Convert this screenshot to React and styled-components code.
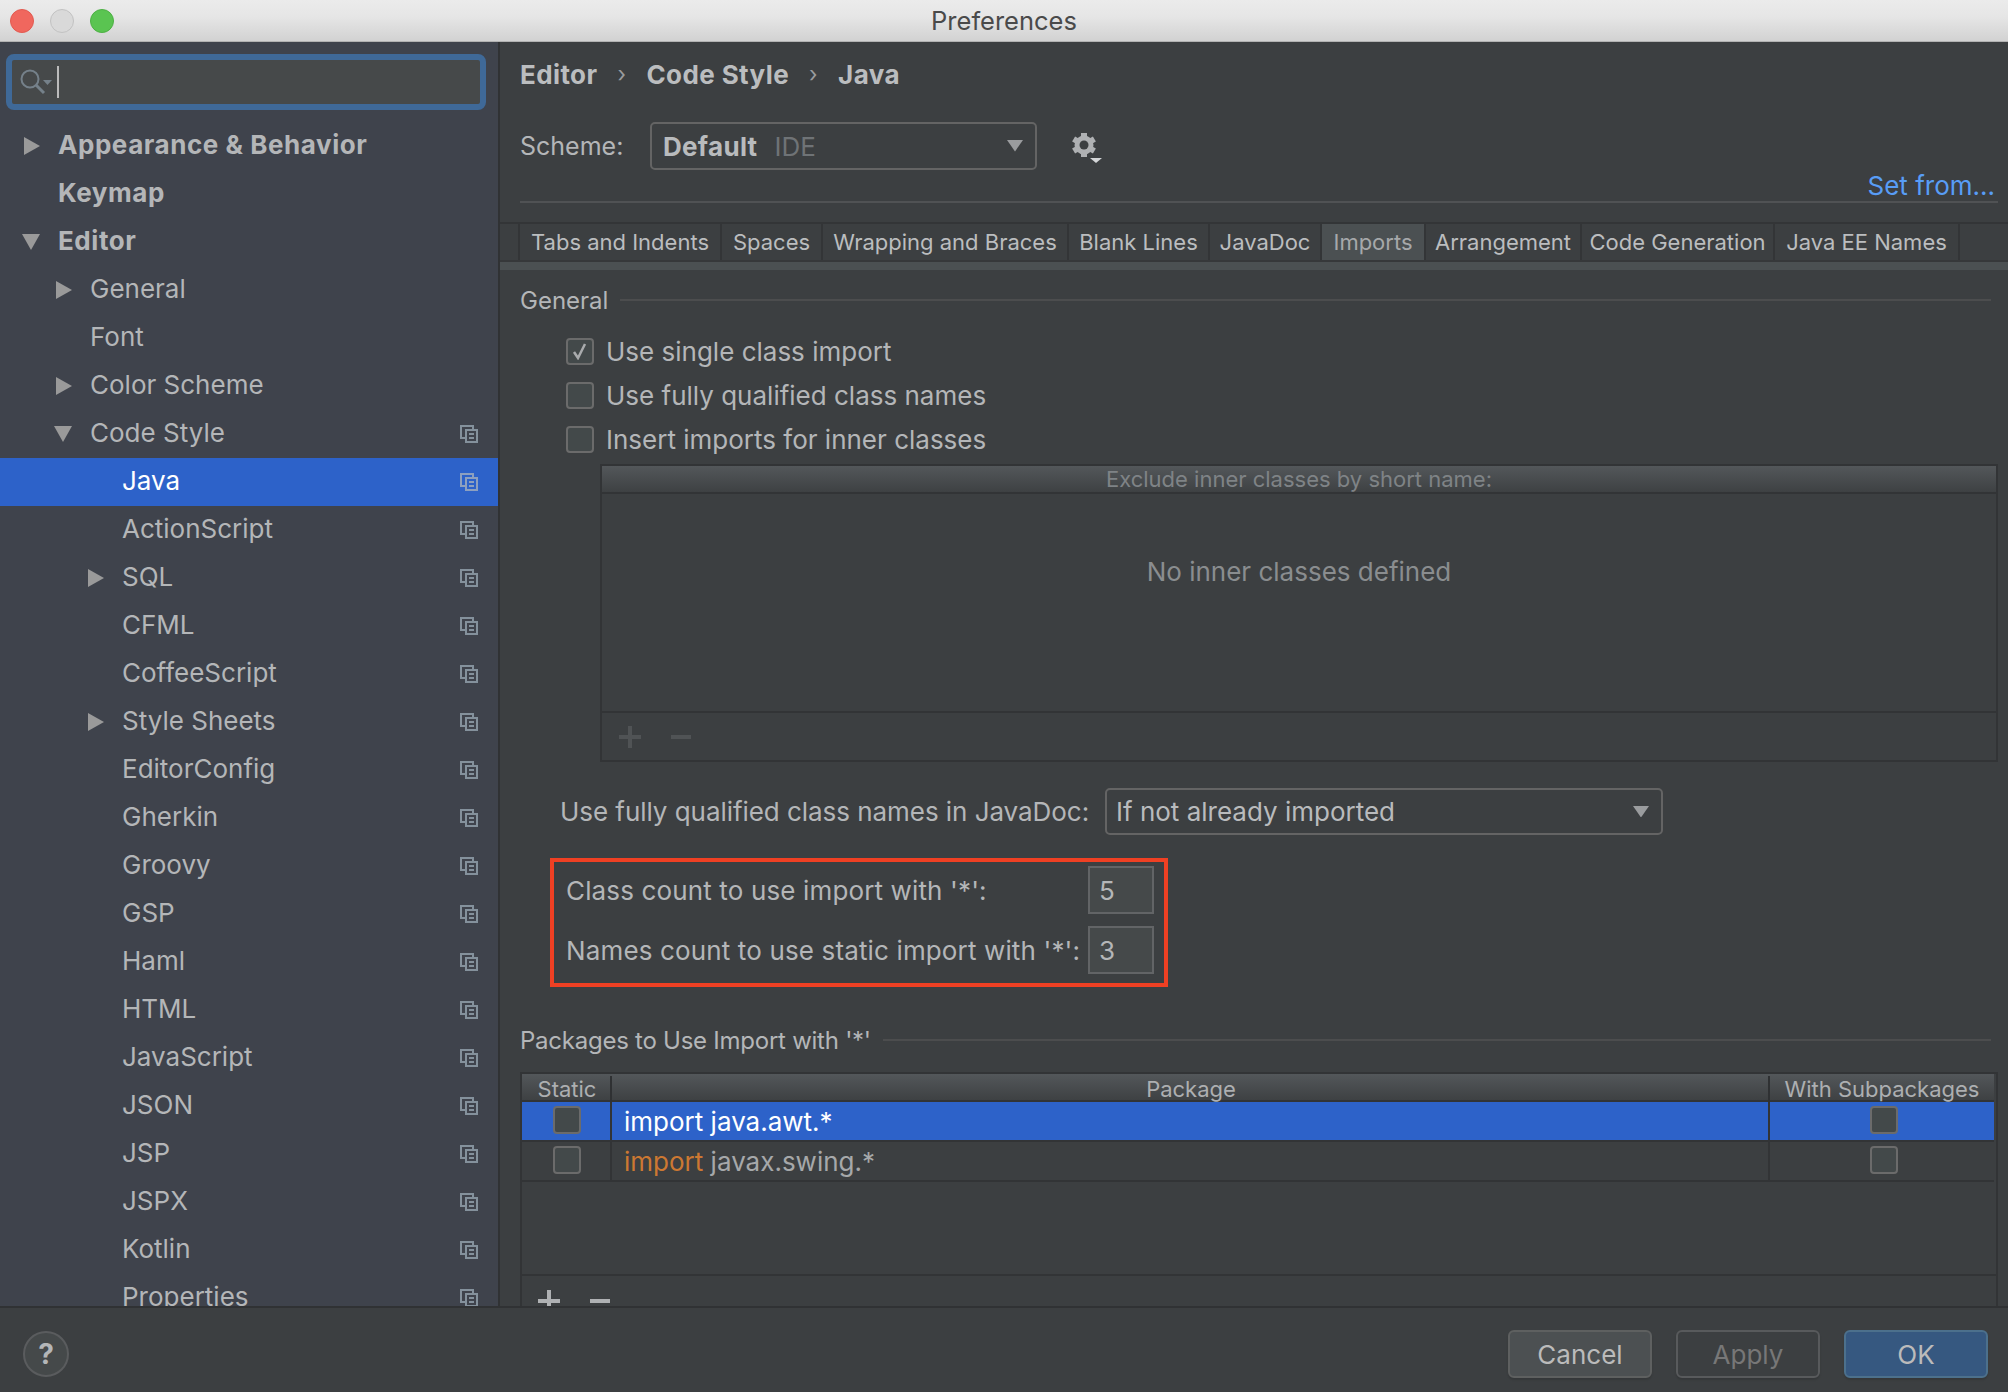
import React from "react";
import styled, { createGlobalStyle } from "styled-components";

const GlobalStyle = createGlobalStyle`
  html, body {
    margin: 0;
    padding: 0;
    background: #3c3f41;
  }
  * {
    box-sizing: border-box;
  }
`;

const Window = styled.div`
  width: 2008px;
  height: 1392px;
  display: flex;
  flex-direction: column;
  overflow: hidden;
  font-family: Inter, "Liberation Sans", sans-serif;
  font-size: 26px;
  color: #b4b6b8;
  background: #3c3f41;
`;

const TitleBar = styled.div`
  height: 42px;
  flex: none;
  display: flex;
  align-items: center;
  border-bottom: 1px solid #b2b2b2;
  background: linear-gradient(#ebebeb, #e6e6e6 40%, #d2d2d2);
  position: relative;
`;

const Lights = styled.div`
  display: flex;
  gap: 16px;
  padding-left: 10px;
`;

const Light = styled.span`
  width: 24px;
  height: 24px;
  border-radius: 50%;
  background: ${(p) => p.$color};
  border: 1px solid ${(p) => p.$edge};
`;

const WindowTitle = styled.div`
  position: absolute;
  left: 0;
  right: 0;
  text-align: center;
  font-size: 25.5px;
  color: #4a4a4a;
`;

const Body = styled.div`
  flex: 1;
  min-height: 0;
  display: flex;
`;

const Sidebar = styled.div`
  width: 500px;
  flex: none;
  background: #3f434c;
  border-right: 2px solid #303234;
  overflow: hidden;
`;

const SearchBox = styled.div`
  width: 480px;
  height: 56px;
  margin: 12px 0 12px 6px;
  display: flex;
  align-items: center;
  gap: 3px;
  padding-left: 8px;
  background: #46494a;
  border: 6px solid #3f6998;
  border-radius: 8px;
`;

const Caret = styled.span`
  width: 2px;
  height: 32px;
  background: #bbbbbb;
`;

const TreeRow = styled.div`
  height: 48px;
  display: flex;
  align-items: center;
  padding: 0 20px 0 ${(p) => 24 + p.$level * 32}px;
  font-weight: ${(p) => (p.$bold ? 700 : 400)};
  letter-spacing: ${(p) => (p.$bold ? "0.55px" : "0")};
  background: ${(p) => (p.$selected ? "#2d62c9" : "transparent")};
  color: ${(p) => (p.$selected ? "#ffffff" : "#b4b6b8")};
`;

const ArrowSlot = styled.span`
  width: 34px;
  flex: none;
  display: flex;
  align-items: center;
`;

const TreeLabel = styled.span`
  flex: 1;
  white-space: nowrap;
  padding-bottom: 3px;
`;

const Panel = styled.div`
  flex: 1;
  min-width: 0;
  overflow: hidden;
  background: #3c3f41;
`;

const Breadcrumb = styled.div`
  height: 64px;
  display: flex;
  align-items: center;
  padding-left: 20px;
  font-weight: 700;
  letter-spacing: 0.4px;
  color: #bbbdbf;
`;

const Crumb = styled.span`
  font-weight: 400;
  color: #9a9c9e;
  font-size: 22px;
  width: 49px;
  text-align: center;
`;

const SchemeRow = styled.div`
  margin-top: 16px;
  height: 48px;
  display: flex;
  align-items: center;
  padding-left: 20px;
`;

const SchemeLabel = styled.span`
  width: 130px;
  font-size: 25px;
`;

const Combo = styled.div`
  width: ${(p) => p.$w}px;
  height: ${(p) => p.$h}px;
  display: flex;
  align-items: center;
  padding: 0 12px 0 ${(p) => p.$pad}px;
  border: 2px solid #646464;
  border-radius: 5px;
  background: #3c3f41;
`;

const ComboText = styled.span`
  flex: 1;
  color: #b9bbbd;
  font-weight: ${(p) => (p.$bold ? 700 : 400)};
  letter-spacing: ${(p) => (p.$bold ? "0.3px" : "0")};
`;

const ComboDim = styled.span`
  font-weight: 400;
  letter-spacing: 0;
  color: #6f7376;
  margin-left: 17px;
`;

const GearWrap = styled.span`
  margin-left: 35px;
  padding-top: 4px;
  display: flex;
`;

const SetFromRow = styled.div`
  height: 31px;
  display: flex;
  justify-content: flex-end;
  align-items: center;
  padding-right: 13px;
`;

const SetFromLink = styled.a`
  color: #589df6;
`;

const Rule = styled.div`
  height: 2px;
  margin: 0 10px 0 20px;
  background: #505254;
`;

const TabBar = styled.div`
  margin-top: 19px;
  height: 40px;
  display: flex;
  padding-left: 18px;
  font-size: 22px;
  border-top: 2px solid #333537;
  border-bottom: 2px solid #36383a;
`;

const Tab = styled.div`
  width: ${(p) => p.$w}px;
  flex: none;
  display: flex;
  align-items: center;
  justify-content: center;
  white-space: nowrap;
  border-left: ${(p) => (p.$first ? "2px solid #333537" : "0")};
  border-right: 2px solid #333537;
  background: ${(p) => (p.$active ? "#4b5052" : "transparent")};
  color: ${(p) => (p.$active ? "#a6a8aa" : "#bbbdbf")};
`;

const TabBand = styled.div`
  height: 8px;
  background: #4b5052;
`;

const GroupTitle = styled.div`
  margin: ${(p) => p.$top}px 17px 0 20px;
  height: 36px;
  display: flex;
  align-items: center;
  gap: 12px;
  white-space: nowrap;
  font-size: 24px;
  letter-spacing: ${(p) => (p.$tight ? "-0.25px" : "0")};
`;

const GroupLine = styled.span`
  flex: 1;
  height: 2px;
  background: #4c4d4e;
`;

const CheckList = styled.div`
  margin-top: 11px;
  padding-left: 66px;
`;

const CheckRow = styled.div`
  height: 44px;
  display: flex;
  align-items: center;
  gap: 12px;
`;

const Box = styled.span`
  width: 28px;
  height: ${(p) => (p.$tall ? 28 : 27)}px;
  flex: none;
  display: flex;
  align-items: center;
  justify-content: center;
  background: #43494a;
  border: 2px solid #6b6b6b;
  border-radius: 4px;
`;

const ExcludeTable = styled.div`
  margin: 3px 10px 0 100px;
  height: 298px;
  display: flex;
  flex-direction: column;
  border: 2px solid #323436;
`;

const HeaderStrip = styled.div`
  height: 28px;
  flex: none;
  display: flex;
  align-items: center;
  justify-content: center;
  font-size: 22px;
  color: #7f8386;
  background: linear-gradient(#53575a, #3e4143);
  border-bottom: 2px solid #323436;
`;

const EmptyArea = styled.div`
  flex: 1;
  display: flex;
  align-items: center;
  justify-content: center;
  padding-bottom: 62px;
  color: #8a8d8f;
`;

const TableTools = styled.div`
  height: ${(p) => p.$h}px;
  flex: none;
  display: flex;
  align-items: ${(p) => (p.$top ? "flex-start" : "center")};
  gap: 30px;
  padding: ${(p) => (p.$top ? "14px" : "0")} 0 0 ${(p) => p.$left}px;
  border-top: 2px solid #323436;
`;

const JavaDocRow = styled.div`
  margin-top: 26px;
  height: 47px;
  display: flex;
  align-items: center;
  padding-left: 60px;
`;

const JavaDocLabel = styled.span`
  width: 545px;
  white-space: nowrap;
  letter-spacing: -0.05px;
`;

const CountBox = styled.div`
  margin: 23px 0 0 50px;
  width: 618px;
  height: 129px;
  display: flex;
  flex-direction: column;
  gap: 12px;
  padding: 4px 10px 0 12px;
  border: 4px solid #ef4023;
`;

const CountRow = styled.div`
  height: 48px;
  display: flex;
  align-items: center;
  justify-content: space-between;
  white-space: nowrap;
  letter-spacing: 0.14px;
`;

const CountInput = styled.div`
  width: 66px;
  height: 48px;
  flex: none;
  display: flex;
  align-items: center;
  padding-left: 9px;
  background: #45494a;
  border: 2px solid #626466;
`;

const PackageTable = styled.div`
  margin: 14px 10px 0 20px;
  height: 300px;
  border: 2px solid #323436;
  border-bottom: 0;
`;

const ColGrid = styled.div`
  display: grid;
  grid-template-columns: 90px 1158px 1fr;
  margin-right: 2px;
`;

const HeadRow = styled(ColGrid)`
  height: 28px;
  font-size: 22px;
  background: linear-gradient(#53575a, #3e4143);
  border-bottom: 2px solid #323436;
`;

const HeadCell = styled.div`
  display: flex;
  align-items: center;
  justify-content: center;
  padding-bottom: 2px;
  color: #adafb1;
  box-shadow: ${(p) => (p.$last ? "none" : "inset -2px 0 0 #2f3133")};
  margin: 2px 0;
`;

const DataRow = styled(ColGrid)`
  height: 40px;
  border-bottom: 2px solid #323436;
  background: ${(p) => (p.$selected ? "#2d62c9" : "transparent")};
`;

const DataCell = styled.div`
  display: flex;
  align-items: center;
  justify-content: ${(p) => (p.$center ? "center" : "flex-start")};
  padding: 0 0 ${(p) => (p.$center ? 2 : 0)}px ${(p) => p.$left}px;
  border-right: ${(p) => (p.$last ? "0" : "2px solid #323436")};
  white-space: pre;
`;

const PackageLine = styled.span`
  padding-top: 1px;
`;

const Keyword = styled.span`
  color: ${(p) => (p.$selected ? "#ffffff" : "#cc7832")};
`;

const PackageName = styled.span`
  color: ${(p) => (p.$selected ? "#ffffff" : "#a6a8aa")};
`;

const TableSpace = styled.div`
  height: 92px;
`;

const Footer = styled.div`
  height: 86px;
  flex: none;
  display: flex;
  align-items: flex-start;
  justify-content: space-between;
  padding: 22px 20px 0 23px;
  background: #3c3f41;
  border-top: 2px solid #303234;
`;

const HelpButton = styled.div`
  width: 46px;
  height: 46px;
  margin-top: 1px;
  display: flex;
  align-items: center;
  justify-content: center;
  border-radius: 50%;
  background: #45494a;
  border: 2px solid #5a5c5e;
  font-size: 28px;
  font-weight: 700;
  color: #b4b6b8;
`;

const ButtonGroup = styled.div`
  display: flex;
  gap: 24px;
`;

const Button = styled.div`
  width: 144px;
  height: 48px;
  display: flex;
  align-items: center;
  justify-content: center;
  border-radius: 6px;
  border: 2px solid ${(p) => p.$edge};
  background: ${(p) => p.$bg};
  color: ${(p) => p.$color};
  box-shadow: 0 2px 2px rgba(0, 0, 0, 0.12);
`;

const TriangleRight = ({ color = "#9a9a9a" }) => (
  <svg width="16" height="18" viewBox="0 0 16 18">
    <path d="M0 0L16 9L0 18Z" fill={color} />
  </svg>
);

const TriangleDown = ({ color = "#9a9a9a" }) => (
  <svg width="18" height="16" viewBox="0 0 18 16" style={{ marginLeft: -2 }}>
    <path d="M0 0H18L9 16Z" fill={color} />
  </svg>
);

const SearchIcon = () => (
  <svg width="34" height="26" viewBox="0 0 34 26">
    <circle cx="10" cy="10" r="8.500" fill="none" stroke="#75818a" strokeWidth="2" />
    <path d="M16 16L24 24" stroke="#75818a" strokeWidth="3" />
    <path d="M23 11H32L27.500 16Z" fill="#75818a" />
  </svg>
);

const ProjectIcon = ({ selected }) => {
  const c = selected ? "#8da0bf" : "#84919c";
  return (
    <svg width="18" height="18" viewBox="0 0 18 18" fill="none" stroke={c} strokeWidth="2">
      <path d="M5 13H1V1H13V5" />
      <rect x="6" y="5" width="11" height="12" />
      <path d="M9 9H14M9 13H14" />
    </svg>
  );
};

const CheckMark = () => (
  <svg width="16" height="18" viewBox="0 0 16 18" fill="none">
    <path d="M2 10L6 16L13 2" stroke="#a9abad" strokeWidth="2.500" />
  </svg>
);

const ChevronSmallDown = ({ size = 14 }) => (
  <svg width={size} height={size * 0.72} viewBox="0 0 14 10">
    <path d="M0 0H14L7 10Z" fill="#9a9c9e" />
  </svg>
);

const Gear = () => (
  <svg width="30" height="32" viewBox="0 0 30 32">
    <g fill="#afb1b3">
      <rect x="9" y="1" width="6" height="24" />
      <rect x="9" y="1" width="6" height="24" transform="rotate(60 12 13)" />
      <rect x="9" y="1" width="6" height="24" transform="rotate(120 12 13)" />
      <circle cx="12" cy="13" r="9.500" />
    </g>
    <circle cx="12" cy="13" r="4.500" fill="#3c3f41" />
    <path d="M18 26H30L24 31Z" fill="#d4d6d8" />
  </svg>
);

const PlusMinus = ({ color, width = 22 }) => (
  <>
    <svg width={width} height={width} viewBox="0 0 22 22">
      <path d="M0 11H22M11 0V22" stroke={color} strokeWidth="4" />
    </svg>
    <svg width={width} height={width} viewBox="0 0 22 22">
      <path d="M0 11H20" stroke={color} strokeWidth="4" />
    </svg>
  </>
);

const treeItems = [
  { label: "Appearance & Behavior", level: 0, arrow: "right", bold: true },
  { label: "Keymap", level: 0, bold: true },
  { label: "Editor", level: 0, arrow: "down", bold: true },
  { label: "General", level: 1, arrow: "right" },
  { label: "Font", level: 1 },
  { label: "Color Scheme", level: 1, arrow: "right" },
  { label: "Code Style", level: 1, arrow: "down", icon: true },
  { label: "Java", level: 2, icon: true, selected: true },
  { label: "ActionScript", level: 2, icon: true },
  { label: "SQL", level: 2, arrow: "right", icon: true },
  { label: "CFML", level: 2, icon: true },
  { label: "CoffeeScript", level: 2, icon: true },
  { label: "Style Sheets", level: 2, arrow: "right", icon: true },
  { label: "EditorConfig", level: 2, icon: true },
  { label: "Gherkin", level: 2, icon: true },
  { label: "Groovy", level: 2, icon: true },
  { label: "GSP", level: 2, icon: true },
  { label: "Haml", level: 2, icon: true },
  { label: "HTML", level: 2, icon: true },
  { label: "JavaScript", level: 2, icon: true },
  { label: "JSON", level: 2, icon: true },
  { label: "JSP", level: 2, icon: true },
  { label: "JSPX", level: 2, icon: true },
  { label: "Kotlin", level: 2, icon: true },
  { label: "Properties", level: 2, icon: true },
];

const tabs = [
  { label: "Tabs and Indents", w: 204, first: true },
  { label: "Spaces", w: 101 },
  { label: "Wrapping and Braces", w: 246 },
  { label: "Blank Lines", w: 141 },
  { label: "JavaDoc", w: 112 },
  { label: "Imports", w: 104, active: true },
  { label: "Arrangement", w: 156 },
  { label: "Code Generation", w: 193 },
  { label: "Java EE Names", w: 185 },
];

const packages = [
  { name: "java.awt.*", selected: true },
  { name: "javax.swing.*" },
];

export default function App() {
  return (
    <Window>
      <GlobalStyle />
      <TitleBar>
        <Lights>
          <Light $color="#f0675e" $edge="#e25a50" />
          <Light $color="#d9d9d9" $edge="#c2c2c2" />
          <Light $color="#5ac451" $edge="#4db044" />
        </Lights>
        <WindowTitle>Preferences</WindowTitle>
      </TitleBar>
      <Body>
        <Sidebar>
          <SearchBox>
            <SearchIcon />
            <Caret />
          </SearchBox>
          {treeItems.map((item) => (
            <TreeRow
              key={item.label}
              $level={item.level}
              $bold={item.bold}
              $selected={item.selected}
            >
              <ArrowSlot>
                {item.arrow === "right" && <TriangleRight />}
                {item.arrow === "down" && <TriangleDown />}
              </ArrowSlot>
              <TreeLabel>{item.label}</TreeLabel>
              {item.icon && <ProjectIcon selected={item.selected} />}
            </TreeRow>
          ))}
        </Sidebar>
        <Panel>
          <Breadcrumb>
            Editor<Crumb>›</Crumb>Code Style<Crumb>›</Crumb>Java
          </Breadcrumb>
          <SchemeRow>
            <SchemeLabel>Scheme:</SchemeLabel>
            <Combo $w={387} $h={48} $pad={11}>
              <ComboText $bold>
                Default<ComboDim>IDE</ComboDim>
              </ComboText>
              <ChevronSmallDown size={16} />
            </Combo>
            <GearWrap>
              <Gear />
            </GearWrap>
          </SchemeRow>
          <SetFromRow>
            <SetFromLink>Set from...</SetFromLink>
          </SetFromRow>
          <Rule />
          <TabBar>
            {tabs.map((t) => (
              <Tab key={t.label} $w={t.w} $first={t.first} $active={t.active}>
                {t.label}
              </Tab>
            ))}
          </TabBar>
          <TabBand />
          <GroupTitle $top={12}>
            General
            <GroupLine />
          </GroupTitle>
          <CheckList>
            <CheckRow>
              <Box>
                <CheckMark />
              </Box>
              Use single class import
            </CheckRow>
            <CheckRow>
              <Box />
              Use fully qualified class names
            </CheckRow>
            <CheckRow>
              <Box />
              Insert imports for inner classes
            </CheckRow>
          </CheckList>
          <ExcludeTable>
            <HeaderStrip>Exclude inner classes by short name:</HeaderStrip>
            <EmptyArea>No inner classes defined</EmptyArea>
            <TableTools $h={49} $left={17}>
              <PlusMinus color="#505355" />
            </TableTools>
          </ExcludeTable>
          <JavaDocRow>
            <JavaDocLabel>Use fully qualified class names in JavaDoc:</JavaDocLabel>
            <Combo $w={558} $h={47} $pad={9}>
              <ComboText>If not already imported</ComboText>
              <ChevronSmallDown size={16} />
            </Combo>
          </JavaDocRow>
          <CountBox>
            <CountRow>
              Class count to use import with '*':
              <CountInput>5</CountInput>
            </CountRow>
            <CountRow>
              Names count to use static import with '*':
              <CountInput>3</CountInput>
            </CountRow>
          </CountBox>
          <GroupTitle $top={35} $tight>
            Packages to Use Import with '*'
            <GroupLine />
          </GroupTitle>
          <PackageTable>
            <HeadRow>
              <HeadCell>Static</HeadCell>
              <HeadCell>Package</HeadCell>
              <HeadCell $last>With Subpackages</HeadCell>
            </HeadRow>
            {packages.map((pkg) => (
              <DataRow key={pkg.name} $selected={pkg.selected}>
                <DataCell $center $left={2}>
                  <Box $tall />
                </DataCell>
                <DataCell $left={12}>
                  <PackageLine>
                    <Keyword $selected={pkg.selected}>import</Keyword>{" "}
                    <PackageName $selected={pkg.selected}>{pkg.name}</PackageName>
                  </PackageLine>
                </DataCell>
                <DataCell $center $last $left={4}>
                  <Box $tall />
                </DataCell>
              </DataRow>
            ))}
            <TableSpace />
            <TableTools $h={40} $left={16} $top>
              <PlusMinus color="#afb1b3" />
            </TableTools>
          </PackageTable>
        </Panel>
      </Body>
      <Footer>
        <HelpButton>?</HelpButton>
        <ButtonGroup>
          <Button $bg="#4c5052" $edge="#5e6060" $color="#bbbbbb">
            Cancel
          </Button>
          <Button $bg="#3c3f41" $edge="#585a5c" $color="#777777">
            Apply
          </Button>
          <Button $bg="#365880" $edge="#4c708c" $color="#bbbbbb">
            OK
          </Button>
        </ButtonGroup>
      </Footer>
    </Window>
  );
}
